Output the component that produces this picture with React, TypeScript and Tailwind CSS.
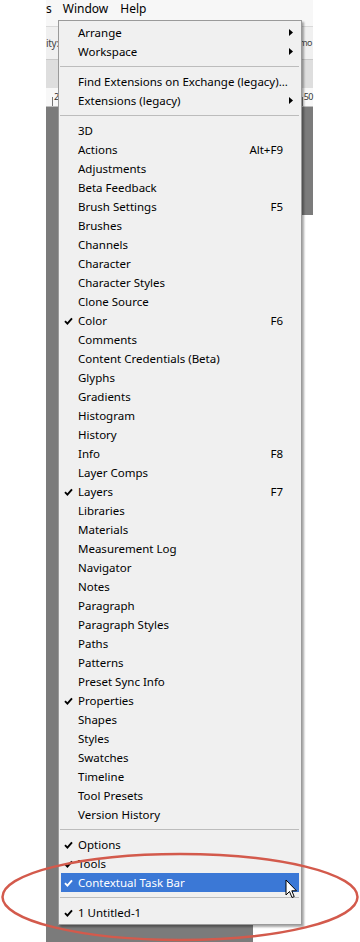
import React from "react";

type Item = { label: string; check?: boolean; shortcut?: string; sub?: boolean; active?: boolean };

const groups: Item[][] = [
  [
    { label: "Arrange", sub: true },
    { label: "Workspace", sub: true },
  ],
  [
    { label: "Find Extensions on Exchange (legacy)..." },
    { label: "Extensions (legacy)", sub: true },
  ],
  [
    { label: "3D" },
    { label: "Actions", shortcut: "Alt+F9" },
    { label: "Adjustments" },
    { label: "Beta Feedback" },
    { label: "Brush Settings", shortcut: "F5" },
    { label: "Brushes" },
    { label: "Channels" },
    { label: "Character" },
    { label: "Character Styles" },
    { label: "Clone Source" },
    { label: "Color", check: true, shortcut: "F6" },
    { label: "Comments" },
    { label: "Content Credentials (Beta)" },
    { label: "Glyphs" },
    { label: "Gradients" },
    { label: "Histogram" },
    { label: "History" },
    { label: "Info", shortcut: "F8" },
    { label: "Layer Comps" },
    { label: "Layers", check: true, shortcut: "F7" },
    { label: "Libraries" },
    { label: "Materials" },
    { label: "Measurement Log" },
    { label: "Navigator" },
    { label: "Notes" },
    { label: "Paragraph" },
    { label: "Paragraph Styles" },
    { label: "Paths" },
    { label: "Patterns" },
    { label: "Preset Sync Info" },
    { label: "Properties", check: true },
    { label: "Shapes" },
    { label: "Styles" },
    { label: "Swatches" },
    { label: "Timeline" },
    { label: "Tool Presets" },
    { label: "Version History" },
  ],
  [
    { label: "Options", check: true },
    { label: "Tools", check: true },
    { label: "Contextual Task Bar", check: true, active: true },
  ],
  [{ label: "1 Untitled-1", check: true }],
];

function Check({ white }: { white?: boolean }) {
  return (
    <svg width="9" height="8" viewBox="0 0 9 8" className="absolute left-[3px] top-[6px]">
      <path d="M1 4.2 L3.4 6.6 L8 1.3" fill="none" stroke={white ? "#ffffff" : "#000000"} strokeWidth="1.9" />
    </svg>
  );
}

function Row({ item }: { item: Item }) {
  return (
    <div
      className={
        "relative mx-[2px] h-[19px] flex items-center pl-[17px] pr-[16px] leading-[19px] whitespace-nowrap " +
        (item.active ? "bg-[#3b78d6] text-white" : "text-black")
      }
    >
      {item.check && <Check white={item.active} />}
      <span className="flex-1">{item.label}</span>
      {item.shortcut && <span>{item.shortcut}</span>}
      {item.sub && (
        <svg width="4" height="7" viewBox="0 0 4 7" className="absolute right-[6px] top-[6px]">
          <path d="M0 0 L4 3.5 L0 7 Z" fill="#000" />
        </svg>
      )}
    </div>
  );
}

function Sep() {
  return (
    <div className="h-[11px] pt-[5px] ml-[1px] mr-[2px]">
      <div className="h-px bg-[#bcbcbc]" />
    </div>
  );
}

export default function App() {
  return (
    <div className="relative w-[360px] h-[942px] bg-white overflow-hidden font-['Noto_Sans',sans-serif] text-[11.5px] text-black">
      {/* background app window */}
      <div className="ml-[46px] w-[267px] h-full flex flex-col">
        <div className="h-[27px] bg-[#f7f7f7] border-b border-[#d9d9d9] flex items-start whitespace-nowrap overflow-hidden text-[12px]">
          <span className="leading-[18px]">s</span>
          <span className="leading-[18px] ml-[11px]">Window</span>
          <span className="leading-[18px] ml-[12px]">Help</span>
        </div>
        <div className="h-[33px] bg-[#f0f0f0] border-b border-[#c9c9c9] flex items-center justify-between whitespace-nowrap text-[10px] text-[#444]">
          <span className="tracking-[-0.3px]">ity:</span>
          <span className="tracking-[-0.5px] text-[9px] pr-[1px]">mo</span>
        </div>
        <div className="h-[28px] bg-[#dedede]" />
        <div className="h-[19px] bg-[#f8f8f8] border-b border-[#bdbdbd] flex items-end justify-between text-[9px] text-[#333]">
          <div className="flex items-end h-full">
            <div className="w-px h-[9px] bg-[#777] ml-[6px]" />
            <span className="leading-[14px] ml-[1px] mb-[2px]">2</span>
          </div>
          <div className="flex items-end h-full w-[11px]">
            <div className="w-px h-[9px] bg-[#777]" />
            <span className="leading-[14px] ml-[1px] mb-[2px] tracking-[-0.5px]">50</span>
          </div>
        </div>
        <div className="flex-1 flex">
          <div className="w-[12px] bg-[#7b7b7b]" />
          <div className="flex-1 flex flex-col">
            <div className="flex-1 bg-[#7b7b7b]" />
            <div className="h-[18px] flex">
              <div className="w-[195px] bg-[#7b7b7b]" />
              <div className="flex-1 bg-white" />
            </div>
          </div>
          <div className="w-[11px] flex flex-col">
            <div className="h-[108px] bg-[#7b7b7b]" />
            <div className="flex-1 bg-white" />
          </div>
        </div>
      </div>

      {/* dropdown menu */}
      <div className="absolute left-[58px] top-[20px] w-[244px] bg-[#f0f0f0] border border-[#9a9a9a] pt-[2px] pb-[2px] shadow-[2px_2px_2px_rgba(0,0,0,0.35)]">
        {groups.map((g, gi) => (
          <React.Fragment key={gi}>
            {gi > 0 && <Sep />}
            {g.map((it) => (
              <Row key={it.label} item={it} />
            ))}
          </React.Fragment>
        ))}
      </div>

      {/* mouse cursor */}
      <svg width="13" height="20" viewBox="0 0 13 20" className="absolute left-[285px] top-[879px]">
        <path
          d="M1 1 L1 16 L4.5 12.5 L7 18.5 L9.2 17.6 L6.8 11.8 L11.5 11.8 Z"
          fill="#ffffff"
          stroke="#000000"
          strokeWidth="1"
          strokeLinejoin="miter"
        />
      </svg>

      {/* red annotation ellipse */}
      <svg width="360" height="942" className="absolute left-0 top-0 pointer-events-none">
        <ellipse cx="180" cy="897" rx="177.5" ry="43" fill="none" stroke="#d35a4c" strokeWidth="2.5" />
      </svg>
    </div>
  );
}
